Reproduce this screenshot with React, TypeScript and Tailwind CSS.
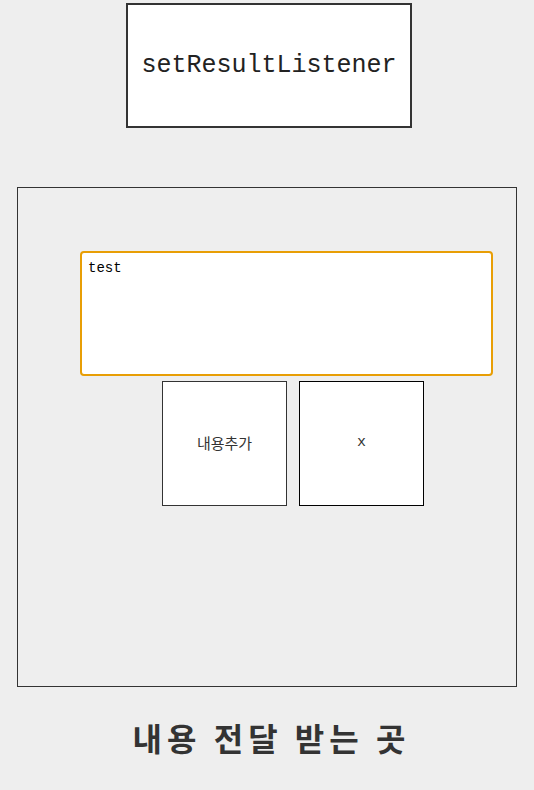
export default function App() {
  return (
    <div
      className="min-h-[790px] w-full bg-[#eeeeee] text-[#333333]"
      style={{ fontFamily: '"Noto Sans CJK KR", "Noto Sans", sans-serif' }}
    >
      <div className="flex flex-col items-center pt-[3px]">
        {/* title box */}
        <div className="ml-[4px] flex h-[125px] w-[286px] items-center justify-center border-2 border-[#333333] bg-white">
          <span className="font-['Liberation_Mono',monospace] text-[25px] text-[#222222]">
            setResultListener
          </span>
        </div>

        {/* content area */}
        <div className="mt-[59px] flex h-[500px] w-[500px] flex-col border border-[#333333]">
          <div className="ml-[62px] mt-[63px] h-[125px] w-[413px] rounded-[4px] border-2 border-[#e89e05] bg-white px-[6px]">
            <span className="font-['Liberation_Mono',monospace] text-[14px] text-black">test</span>
          </div>
          <div className="ml-[144px] mt-[5px] flex gap-[12px]">
            <div className="flex h-[125px] w-[125px] items-center justify-center border border-[#333333] bg-white text-[15px] text-[#333333]">
              내용추가
            </div>
            <div className="flex h-[125px] w-[125px] items-center justify-center border border-black bg-white font-['Liberation_Mono',monospace] text-[15px] text-[#333333]">
              x
            </div>
          </div>
        </div>

        <h1 className="ml-[9px] mt-[26px] text-[32px] font-bold tracking-[5px] text-[#333333]">
          내용 전달 받는 곳
        </h1>
      </div>
    </div>
  );
}
